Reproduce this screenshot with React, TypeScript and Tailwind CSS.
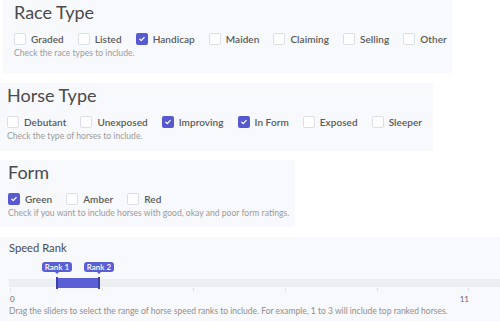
import React from "react";

const font = { fontFamily: "Lato, 'Open Sans', sans-serif" };

function Check({ label, checked }: { label: string; checked?: boolean }) {
  return (
    <label className="flex items-center gap-[5px] mr-[14px] whitespace-nowrap">
      {checked ? (
        <span className="w-[12px] h-[12px] rounded-[2px] bg-[#5659cf] flex items-center justify-center">
          <svg width="8" height="8" viewBox="0 0 8 8">
            <path d="M1.8 4.2 L3.3 5.6 L6.2 2.4" stroke="white" strokeWidth="1.3" fill="none" strokeLinecap="round" strokeLinejoin="round" />
          </svg>
        </span>
      ) : (
        <span className="w-[12px] h-[12px] rounded-[2px] bg-white border border-[#dcdfe4]" />
      )}
      <span className="text-[10px] font-semibold text-[#5a5a5a] leading-[14px] tracking-[0.05px]">{label}</span>
    </label>
  );
}

function Panel({ title, options, help, className }: any) {
  return (
    <div className={"bg-[#f8f9fc] pt-[1px] " + className}>
      <div className="text-[18px] leading-[22px] text-[#4a4a4a]">{title}</div>
      <div className="flex items-center h-[14px] mt-[9px]">
        {options.map((o: any) => (
          <Check key={o[0]} label={o[0]} checked={o[1]} />
        ))}
      </div>
      <div className="text-[8.6px] leading-[11px] text-[#9b9b9b] mt-[2px]">{help}</div>
    </div>
  );
}

export default function App() {
  return (
    <div className="w-[500px] h-[329px] overflow-hidden bg-white" style={font}>
      <Panel
        className="ml-[3px] w-[449px] h-[73px] pl-[11px]"
        title="Race Type"
        options={[["Graded"], ["Listed"], ["Handicap", true], ["Maiden"], ["Claiming"], ["Selling"], ["Other"]]}
        help="Check the race types to include."
      />
      <Panel
        className="mt-[10px] w-[433px] h-[68px] pl-[7px]"
        title="Horse Type"
        options={[["Debutant"], ["Unexposed"], ["Improving", true], ["In Form", true], ["Exposed"], ["Sleeper"]]}
        help="Check the type of horses to include."
      />
      <Panel
        className="mt-[9px] w-[295px] h-[67px] pl-[8px]"
        title="Form"
        options={[["Green", true], ["Amber"], ["Red"]]}
        help="Check if you want to include horses with good, okay and poor form ratings."
      />

      {/* speed rank slider */}
      <div className="mt-[10px] bg-[#f8f9fc] h-[85px] pt-[3px]">
        <div className="pl-[9px] text-[11.2px] leading-[15px] text-[#4a4a4a]">Speed Rank</div>
        <div className="relative h-[27px] mt-[7px]">
          <div className="absolute left-[9px] right-0 top-[17px] h-[8px] bg-[#eceef2]" />
          {[10, 102, 193, 285, 377, 468].map((x) => (
            <div key={x} className="absolute top-[26px] w-px h-[3px] bg-[#dcdfe4]" style={{ left: x }} />
          ))}
          <div className="absolute left-[57px] w-[42px] top-[16px] h-[10px] bg-[#5a5fd6]" />
          <div className="absolute left-[56px] w-[2px] top-[15px] h-[12px] bg-[#3c41b0]" />
          <div className="absolute left-[98px] w-[2px] top-[15px] h-[12px] bg-[#3c41b0]" />
          {[
            ["Rank 1", 42],
            ["Rank 2", 84],
          ].map(([t, x]) => (
            <div key={t as string} className="absolute top-0 flex flex-col items-center" style={{ left: x as number }}>
              <div className="h-[10px] w-[30px] rounded-[3px] bg-[#5a5fd6] text-white text-[8px] leading-[10px] font-semibold text-center">
                {t}
              </div>
              <div className="w-0 h-0 border-l-[2px] border-r-[2px] border-t-[2px] border-l-transparent border-r-transparent border-t-[#5a5fd6]" />
            </div>
          ))}
        </div>
        <div className="flex justify-between pl-[10px] pr-[31px] mt-[4px] text-[8px] leading-[12px] text-[#666]">
          <span>0</span>
          <span>11</span>
        </div>
        <div className="pl-[9px] text-[8.5px] leading-[11px] text-[#8f8f8f] mt-[1px]">
          Drag the sliders to select the range of horse speed ranks to include. For example, 1 to 3 will include top ranked horses.
        </div>
      </div>
    </div>
  );
}
